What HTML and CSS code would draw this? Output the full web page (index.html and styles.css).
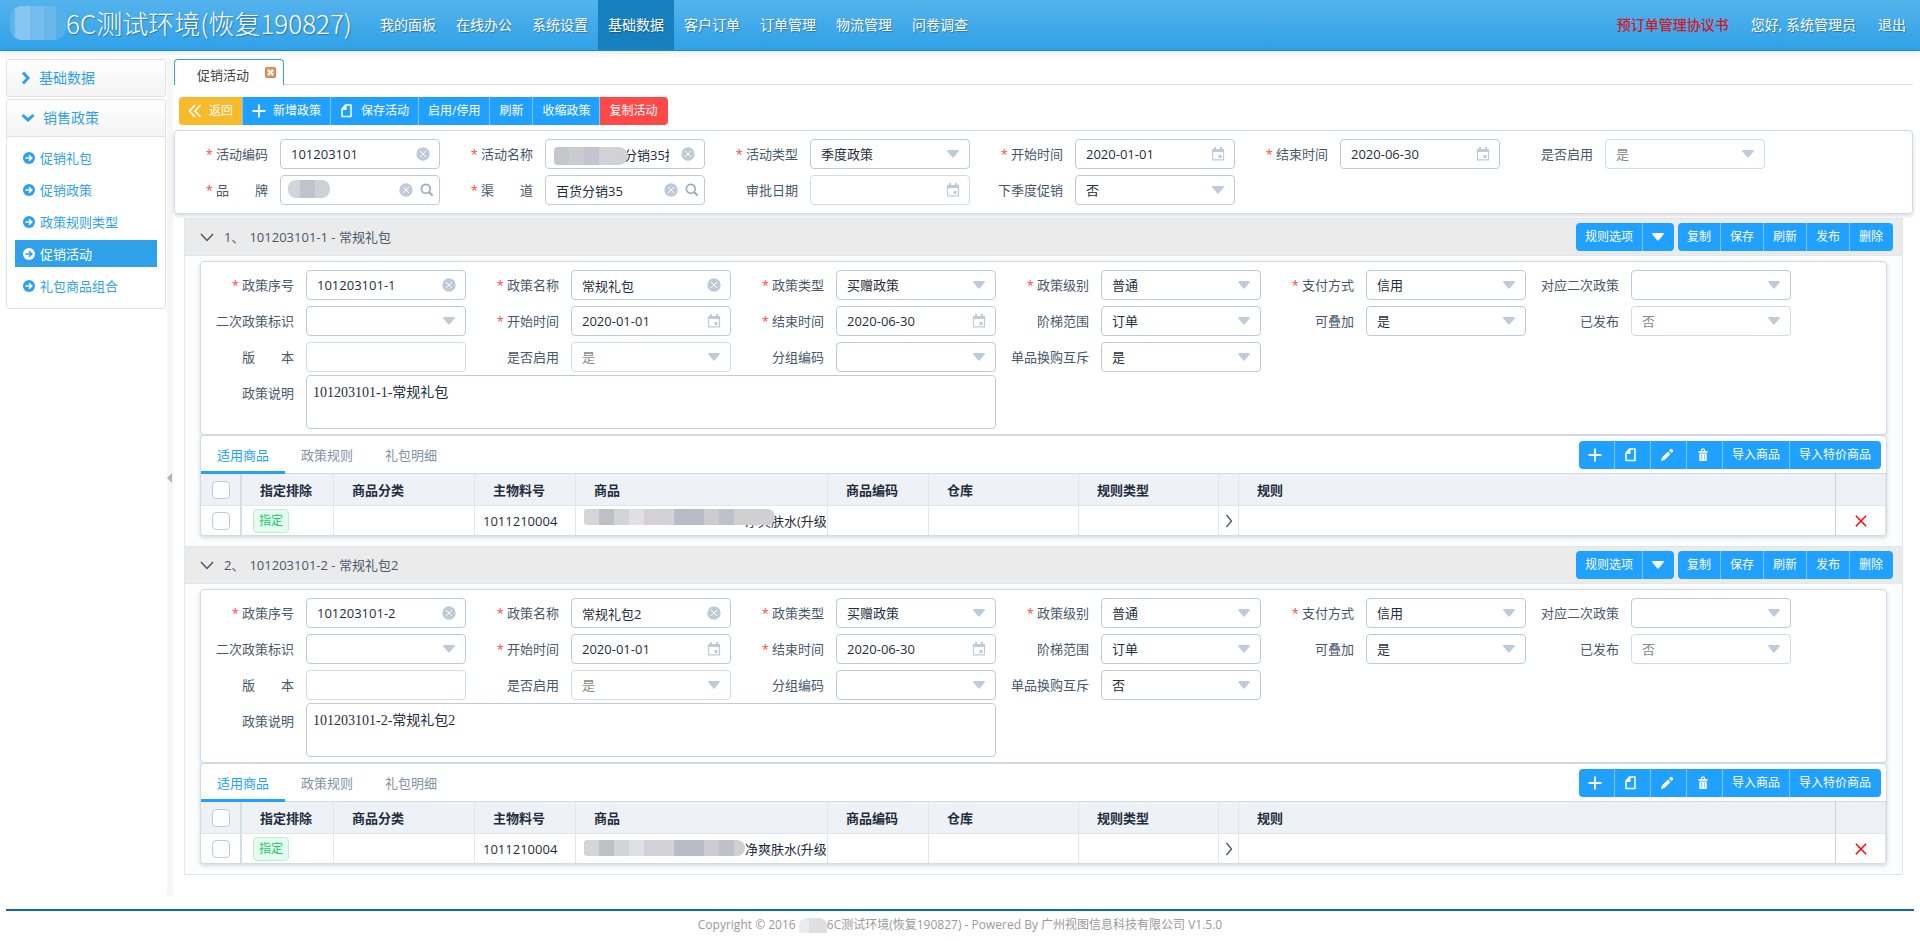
FILE: index.html
```html
<!DOCTYPE html>
<html lang="zh-CN">

<head>
    <meta charset="UTF-8">
    <meta name="viewport" content="width=device-width, initial-scale=1.0">
    <title>促销活动</title>
    <link rel="stylesheet" href="styles.css">
</head>

<body>

    <!-- icons -->
    <svg class="sprite" aria-hidden="true">
        <symbol id="i-caret" viewBox="0 0 12 8"><path d="M0 1 Q0 0 1 0 H11 Q12 0 12 1 L7 7 Q6 8 5 7 Z" fill="currentColor" /></symbol>
        <symbol id="i-clear" viewBox="0 0 14 14"><circle cx="7" cy="7" r="6.7" fill="currentColor" /><path d="M4 4 L10 10 M10 4 L4 10" stroke="#fff" stroke-width="1" /></symbol>
        <symbol id="i-date" viewBox="0 0 14 14"><path d="M1.5 2.5 H12.5 V12.8 H1.5 Z" fill="none" stroke="currentColor" stroke-width="1.2" /><path d="M1 2 H13 V5 H1 Z M3 0 H5 V3 H3 Z M9 0 H11 V3 H9 Z M7.5 8 H10.5 V11 H7.5 Z" fill="currentColor" /></symbol>
        <symbol id="i-search" viewBox="0 0 14 14"><circle cx="5.8" cy="5.8" r="4.4" fill="none" stroke="currentColor" stroke-width="1.6" /><path d="M9 9 L12.6 12.6" stroke="currentColor" stroke-width="2" /></symbol>
        <symbol id="i-plus" viewBox="0 0 14 14"><path d="M7 .5 V13.5 M.5 7 H13.5" stroke="currentColor" stroke-width="1.8" /></symbol>
        <symbol id="i-back" viewBox="0 0 14 14"><path d="M7 1 L1.5 7 L7 13 M12.5 1 L7 7 L12.5 13" fill="none" stroke="currentColor" stroke-width="1.7" /></symbol>
        <symbol id="i-doc" viewBox="0 0 14 14"><path d="M5.5 1 H11 V12.5 H2 V5 Z" fill="none" stroke="currentColor" stroke-width="1.5" stroke-linejoin="round" /><path d="M6.5 1 V6 H2 V5 L5.5 1 Z" fill="currentColor" /></symbol>
        <symbol id="i-edit" viewBox="0 0 14 14"><path d="M1 13 L2 9.5 L8 3.5 L10.5 6 L4.5 12 Z M9 2.5 L10.5 1 Q11.2 .5 12 1.2 L12.8 2 Q13.5 2.8 13 3.5 L11.5 5 Z" fill="currentColor" /></symbol>
        <symbol id="i-trash" viewBox="0 0 14 14"><path d="M2.5 3 H5 V2 Q5 .5 6.2 .5 H7.8 Q9 .5 9 2 V3 H11.5 V4.8 H2.5 Z M6 3 H8 V1.7 H6 Z" fill="currentColor" fill-rule="evenodd" /><path d="M3.3 5.5 H10.7 V13 H3.3 Z" fill="currentColor" /><path d="M5.6 6.5 V12 M8.4 6.5 V12" stroke="#20a0ff" stroke-width=".6" /></symbol>
        <symbol id="i-go" viewBox="0 0 12 12"><circle cx="6" cy="6" r="6" fill="currentColor" /><path d="M2.5 6 H8.5 M6 3.2 L8.8 6 L6 8.8" fill="none" stroke="var(--arrow, #fff)" stroke-width="1.6" /></symbol>
        <symbol id="i-down" viewBox="0 0 14 14"><path d="M1 4 L7 10.5 L13 4" fill="none" stroke="currentColor" stroke-width="1.5" /></symbol>
        <symbol id="i-right" viewBox="0 0 14 14"><path d="M4.5 1 L9.5 7 L4.5 13" fill="none" stroke="currentColor" stroke-width="1.3" /></symbol>
        <symbol id="i-cross" viewBox="0 0 14 14"><path d="M1 1 L13 13 M13 1 L1 13" stroke="currentColor" stroke-width="1.7" /></symbol>
    </svg>

    <header class="topbar">
        <h1 class="brand"><i class="mosaic mosaic-brand"></i>6C测试环境(恢复190827)</h1>
        <nav class="nav">
            <a href="#">我的面板</a>
            <a href="#">在线办公</a>
            <a href="#">系统设置</a>
            <a href="#" class="active">基础数据</a>
            <a href="#">客户订单</a>
            <a href="#">订单管理</a>
            <a href="#">物流管理</a>
            <a href="#">问卷调查</a>
        </nav>
        <div class="user">
            <a href="#" class="agreement">预订单管理协议书</a>
            <span>您好, 系统管理员</span>
            <a href="#">退出</a>
        </div>
    </header>

    <div class="layout">
        <aside class="sidebar">
            <div class="menu">
                <a href="#" class="menu-title"><svg width="12" height="14" viewBox="0 0 12 14"><path d="M3 1.5 L8 7 L3 12.5" fill="none" stroke="currentColor" stroke-width="3" /></svg>基础数据</a>
            </div>
            <div class="menu">
                <a href="#" class="menu-title"><svg width="16" height="12" viewBox="0 0 16 12"><path d="M2.5 3 L8 8 L13.5 3" fill="none" stroke="currentColor" stroke-width="3" /></svg>销售政策</a>
                <div class="menu-list">
                    <a href="#"><svg><use href="#i-go" /></svg>促销礼包</a>
                    <a href="#"><svg><use href="#i-go" /></svg>促销政策</a>
                    <a href="#"><svg><use href="#i-go" /></svg>政策规则类型</a>
                    <a href="#" class="active"><svg><use href="#i-go" /></svg>促销活动</a>
                    <a href="#"><svg><use href="#i-go" /></svg>礼包商品组合</a>
                </div>
            </div>
        </aside>

        <div class="splitter"><i></i></div>

        <main class="main">
            <div class="page-tabs">
                <div class="page-tab">促销活动
                    <button type="button" class="tab-close" aria-label="关闭"><svg viewBox="0 0 11 11"><path d="M3 3 L8 8 M8 3 L3 8" stroke="#fff" stroke-width="2" /></svg></button>
                </div>
            </div>

            <div class="btn-group toolbar">
                <button type="button" class="btn warning"><svg><use href="#i-back" /></svg>返回</button>
                <button type="button" class="btn"><svg><use href="#i-plus" /></svg>新增政策</button>
                <button type="button" class="btn"><svg><use href="#i-doc" /></svg>保存活动</button>
                <button type="button" class="btn">启用/停用</button>
                <button type="button" class="btn">刷新</button>
                <button type="button" class="btn">收缩政策</button>
                <button type="button" class="btn danger">复制活动</button>
            </div>

            <form class="panel form">
                <div class="field"><label for="code" class="required">活动编码</label><div class="control"><input id="code" type="text" value="101203101"><svg><use href="#i-clear" /></svg></div></div>
                <div class="field"><label for="name" class="required">活动名称</label><div class="control"><input id="name" class="masked" type="text" value="分销35折"><i class="mosaic mosaic-name"></i><svg><use href="#i-clear" /></svg></div></div>
                <div class="field"><label for="type" class="required">活动类型</label><div class="control"><select id="type"><option>季度政策</option></select><svg class="caret"><use href="#i-caret" /></svg></div></div>
                <div class="field"><label for="start" class="required">开始时间</label><div class="control"><input id="start" type="text" value="2020-01-01"><svg><use href="#i-date" /></svg></div></div>
                <div class="field"><label for="end" class="required">结束时间</label><div class="control"><input id="end" type="text" value="2020-06-30"><svg><use href="#i-date" /></svg></div></div>
                <div class="field"><label for="enabled">是否启用</label><div class="control"><select id="enabled" disabled><option>是</option></select><svg class="caret"><use href="#i-caret" /></svg></div></div>
                <div class="field"><label for="brand" class="required">品　　牌</label><div class="control"><input id="brand" type="text"><i class="mosaic mosaic-label"></i><svg class="second"><use href="#i-clear" /></svg><svg class="search"><use href="#i-search" /></svg></div></div>
                <div class="field"><label for="channel" class="required">渠　　道</label><div class="control"><input id="channel" type="text" value="百货分销35"><svg class="second"><use href="#i-clear" /></svg><svg class="search"><use href="#i-search" /></svg></div></div>
                <div class="field"><label for="approved">审批日期</label><div class="control"><input id="approved" type="text" disabled><svg><use href="#i-date" /></svg></div></div>
                <div class="field"><label for="next">下季度促销</label><div class="control"><select id="next"><option>否</option></select><svg class="caret"><use href="#i-caret" /></svg></div></div>
            </form>

            <div class="policies">
                <!-- policy 1 -->
                <section class="policy">
                    <div class="policy-head">
                        <svg><use href="#i-down" /></svg>
                        <h2><span>1、</span>101203101-1 - 常规礼包</h2>
                        <div class="btn-group split">
                            <button type="button" class="btn">规则选项</button>
                            <button type="button" class="btn" aria-label="更多规则"><svg class="caret-white"><use href="#i-caret" /></svg></button>
                        </div>
                        <div class="btn-group">
                            <button type="button" class="btn">复制</button>
                            <button type="button" class="btn">保存</button>
                            <button type="button" class="btn">刷新</button>
                            <button type="button" class="btn">发布</button>
                            <button type="button" class="btn">删除</button>
                        </div>
                    </div>
                    <div class="policy-body">
                        <form class="panel form">
                            <div class="field"><label for="p1-no" class="required">政策序号</label><div class="control"><input id="p1-no" type="text" value="101203101-1"><svg><use href="#i-clear" /></svg></div></div>
                            <div class="field"><label for="p1-name" class="required">政策名称</label><div class="control"><input id="p1-name" type="text" value="常规礼包"><svg><use href="#i-clear" /></svg></div></div>
                            <div class="field"><label for="p1-type" class="required">政策类型</label><div class="control"><select id="p1-type"><option>买赠政策</option></select><svg class="caret"><use href="#i-caret" /></svg></div></div>
                            <div class="field"><label for="p1-level" class="required">政策级别</label><div class="control"><select id="p1-level"><option>普通</option></select><svg class="caret"><use href="#i-caret" /></svg></div></div>
                            <div class="field"><label for="p1-pay" class="required">支付方式</label><div class="control"><select id="p1-pay"><option>信用</option></select><svg class="caret"><use href="#i-caret" /></svg></div></div>
                            <div class="field"><label for="p1-second">对应二次政策</label><div class="control"><select id="p1-second"><option></option></select><svg class="caret"><use href="#i-caret" /></svg></div></div>
                            <div class="field"><label for="p1-flag">二次政策标识</label><div class="control"><select id="p1-flag"><option></option></select><svg class="caret"><use href="#i-caret" /></svg></div></div>
                            <div class="field"><label for="p1-start" class="required">开始时间</label><div class="control"><input id="p1-start" type="text" value="2020-01-01"><svg><use href="#i-date" /></svg></div></div>
                            <div class="field"><label for="p1-end" class="required">结束时间</label><div class="control"><input id="p1-end" type="text" value="2020-06-30"><svg><use href="#i-date" /></svg></div></div>
                            <div class="field"><label for="p1-range">阶梯范围</label><div class="control"><select id="p1-range"><option>订单</option></select><svg class="caret"><use href="#i-caret" /></svg></div></div>
                            <div class="field"><label for="p1-stack">可叠加</label><div class="control"><select id="p1-stack"><option>是</option></select><svg class="caret"><use href="#i-caret" /></svg></div></div>
                            <div class="field"><label for="p1-published">已发布</label><div class="control"><select id="p1-published" disabled><option>否</option></select><svg class="caret"><use href="#i-caret" /></svg></div></div>
                            <div class="field"><label for="p1-version">版　　本</label><div class="control"><input id="p1-version" type="text" disabled></div></div>
                            <div class="field"><label for="p1-enabled">是否启用</label><div class="control"><select id="p1-enabled" disabled><option>是</option></select><svg class="caret"><use href="#i-caret" /></svg></div></div>
                            <div class="field"><label for="p1-group">分组编码</label><div class="control"><select id="p1-group"><option></option></select><svg class="caret"><use href="#i-caret" /></svg></div></div>
                            <div class="field"><label for="p1-mutex">单品换购互斥</label><div class="control"><select id="p1-mutex"><option>是</option></select><svg class="caret"><use href="#i-caret" /></svg></div></div>
                            <div class="field note"><label for="p1-note">政策说明</label><textarea id="p1-note">101203101-1-常规礼包</textarea></div>
                        </form>

                        <div class="panel goods">
                            <div class="goods-bar">
                                <div class="tabs" role="tablist">
                                    <button type="button" role="tab" class="tab active">适用商品</button>
                                    <button type="button" role="tab" class="tab">政策规则</button>
                                    <button type="button" role="tab" class="tab">礼包明细</button>
                                </div>
                                <div class="btn-group">
                                    <button type="button" class="btn icon" aria-label="新增"><svg><use href="#i-plus" /></svg></button>
                                    <button type="button" class="btn icon" aria-label="保存"><svg><use href="#i-doc" /></svg></button>
                                    <button type="button" class="btn icon" aria-label="编辑"><svg><use href="#i-edit" /></svg></button>
                                    <button type="button" class="btn icon" aria-label="删除"><svg><use href="#i-trash" /></svg></button>
                                    <button type="button" class="btn">导入商品</button>
                                    <button type="button" class="btn">导入特价商品</button>
                                </div>
                            </div>
                            <table class="table">
                                <colgroup><col class="c-check"><col class="c-flag"><col class="c-cat"><col class="c-no"><col class="c-goods"><col class="c-no"><col class="c-store"><col class="c-type"><col class="c-open"><col><col class="c-del"></colgroup>
                                <thead>
                                    <tr>
                                        <th class="check"><input type="checkbox" aria-label="全选"></th>
                                        <th>指定排除</th>
                                        <th>商品分类</th>
                                        <th>主物料号</th>
                                        <th>商品</th>
                                        <th>商品编码</th>
                                        <th>仓库</th>
                                        <th>规则类型</th>
                                        <th></th>
                                        <th class="rule">规则</th>
                                        <th class="del"></th>
                                    </tr>
                                </thead>
                                <tbody>
                                    <tr>
                                        <td class="check"><input type="checkbox" aria-label="选择"></td>
                                        <td><span class="tag">指定</span></td>
                                        <td></td>
                                        <td>1011210004</td>
                                        <td class="goods-name">净爽肤水(升级<i class="mosaic mosaic-goods long"></i></td>
                                        <td></td>
                                        <td></td>
                                        <td></td>
                                        <td class="open"><svg><use href="#i-right" /></svg></td>
                                        <td class="rule"></td>
                                        <td class="del"><button type="button" aria-label="移除"><svg><use href="#i-cross" /></svg></button></td>
                                    </tr>
                                </tbody>
                            </table>
                        </div>
                    </div>
                </section>

                <!-- policy 2 -->
                <section class="policy">
                    <div class="policy-head">
                        <svg><use href="#i-down" /></svg>
                        <h2><span>2、</span>101203101-2 - 常规礼包2</h2>
                        <div class="btn-group split">
                            <button type="button" class="btn">规则选项</button>
                            <button type="button" class="btn" aria-label="更多规则"><svg class="caret-white"><use href="#i-caret" /></svg></button>
                        </div>
                        <div class="btn-group">
                            <button type="button" class="btn">复制</button>
                            <button type="button" class="btn">保存</button>
                            <button type="button" class="btn">刷新</button>
                            <button type="button" class="btn">发布</button>
                            <button type="button" class="btn">删除</button>
                        </div>
                    </div>
                    <div class="policy-body">
                        <form class="panel form">
                            <div class="field"><label for="p2-no" class="required">政策序号</label><div class="control"><input id="p2-no" type="text" value="101203101-2"><svg><use href="#i-clear" /></svg></div></div>
                            <div class="field"><label for="p2-name" class="required">政策名称</label><div class="control"><input id="p2-name" type="text" value="常规礼包2"><svg><use href="#i-clear" /></svg></div></div>
                            <div class="field"><label for="p2-type" class="required">政策类型</label><div class="control"><select id="p2-type"><option>买赠政策</option></select><svg class="caret"><use href="#i-caret" /></svg></div></div>
                            <div class="field"><label for="p2-level" class="required">政策级别</label><div class="control"><select id="p2-level"><option>普通</option></select><svg class="caret"><use href="#i-caret" /></svg></div></div>
                            <div class="field"><label for="p2-pay" class="required">支付方式</label><div class="control"><select id="p2-pay"><option>信用</option></select><svg class="caret"><use href="#i-caret" /></svg></div></div>
                            <div class="field"><label for="p2-second">对应二次政策</label><div class="control"><select id="p2-second"><option></option></select><svg class="caret"><use href="#i-caret" /></svg></div></div>
                            <div class="field"><label for="p2-flag">二次政策标识</label><div class="control"><select id="p2-flag"><option></option></select><svg class="caret"><use href="#i-caret" /></svg></div></div>
                            <div class="field"><label for="p2-start" class="required">开始时间</label><div class="control"><input id="p2-start" type="text" value="2020-01-01"><svg><use href="#i-date" /></svg></div></div>
                            <div class="field"><label for="p2-end" class="required">结束时间</label><div class="control"><input id="p2-end" type="text" value="2020-06-30"><svg><use href="#i-date" /></svg></div></div>
                            <div class="field"><label for="p2-range">阶梯范围</label><div class="control"><select id="p2-range"><option>订单</option></select><svg class="caret"><use href="#i-caret" /></svg></div></div>
                            <div class="field"><label for="p2-stack">可叠加</label><div class="control"><select id="p2-stack"><option>是</option></select><svg class="caret"><use href="#i-caret" /></svg></div></div>
                            <div class="field"><label for="p2-published">已发布</label><div class="control"><select id="p2-published" disabled><option>否</option></select><svg class="caret"><use href="#i-caret" /></svg></div></div>
                            <div class="field"><label for="p2-version">版　　本</label><div class="control"><input id="p2-version" type="text" disabled></div></div>
                            <div class="field"><label for="p2-enabled">是否启用</label><div class="control"><select id="p2-enabled" disabled><option>是</option></select><svg class="caret"><use href="#i-caret" /></svg></div></div>
                            <div class="field"><label for="p2-group">分组编码</label><div class="control"><select id="p2-group"><option></option></select><svg class="caret"><use href="#i-caret" /></svg></div></div>
                            <div class="field"><label for="p2-mutex">单品换购互斥</label><div class="control"><select id="p2-mutex"><option>否</option></select><svg class="caret"><use href="#i-caret" /></svg></div></div>
                            <div class="field note"><label for="p2-note">政策说明</label><textarea id="p2-note">101203101-2-常规礼包2</textarea></div>
                        </form>

                        <div class="panel goods">
                            <div class="goods-bar">
                                <div class="tabs" role="tablist">
                                    <button type="button" role="tab" class="tab active">适用商品</button>
                                    <button type="button" role="tab" class="tab">政策规则</button>
                                    <button type="button" role="tab" class="tab">礼包明细</button>
                                </div>
                                <div class="btn-group">
                                    <button type="button" class="btn icon" aria-label="新增"><svg><use href="#i-plus" /></svg></button>
                                    <button type="button" class="btn icon" aria-label="保存"><svg><use href="#i-doc" /></svg></button>
                                    <button type="button" class="btn icon" aria-label="编辑"><svg><use href="#i-edit" /></svg></button>
                                    <button type="button" class="btn icon" aria-label="删除"><svg><use href="#i-trash" /></svg></button>
                                    <button type="button" class="btn">导入商品</button>
                                    <button type="button" class="btn">导入特价商品</button>
                                </div>
                            </div>
                            <table class="table">
                                <colgroup><col class="c-check"><col class="c-flag"><col class="c-cat"><col class="c-no"><col class="c-goods"><col class="c-no"><col class="c-store"><col class="c-type"><col class="c-open"><col><col class="c-del"></colgroup>
                                <thead>
                                    <tr>
                                        <th class="check"><input type="checkbox" aria-label="全选"></th>
                                        <th>指定排除</th>
                                        <th>商品分类</th>
                                        <th>主物料号</th>
                                        <th>商品</th>
                                        <th>商品编码</th>
                                        <th>仓库</th>
                                        <th>规则类型</th>
                                        <th></th>
                                        <th class="rule">规则</th>
                                        <th class="del"></th>
                                    </tr>
                                </thead>
                                <tbody>
                                    <tr>
                                        <td class="check"><input type="checkbox" aria-label="选择"></td>
                                        <td><span class="tag">指定</span></td>
                                        <td></td>
                                        <td>1011210004</td>
                                        <td class="goods-name">净爽肤水(升级<i class="mosaic mosaic-goods"></i></td>
                                        <td></td>
                                        <td></td>
                                        <td></td>
                                        <td class="open"><svg><use href="#i-right" /></svg></td>
                                        <td class="rule"></td>
                                        <td class="del"><button type="button" aria-label="移除"><svg><use href="#i-cross" /></svg></button></td>
                                    </tr>
                                </tbody>
                            </table>
                        </div>
                    </div>
                </section>
            </div>
        </main>
    </div>

    <footer class="footer">Copyright © 2016 <i class="mosaic mosaic-footer"></i>6C测试环境(恢复190827) - Powered By 广州视图信息科技有限公司 V1.5.0</footer>

</body>

</html>
```

FILE: styles.css
```css
* {
    box-sizing: border-box;
    margin: 0;
    padding: 0;
}

body {
    font-family: "Open Sans", "Noto Sans CJK SC", sans-serif;
    font-size: 13px;
    line-height: 20px;
    color: #1f2d3d;
    background: #fff;
}

a {
    color: inherit;
    text-decoration: none;
}

button,
input,
select {
    font: inherit;
    color: inherit;
}

button {
    border: 0;
    background: none;
    cursor: pointer;
}

svg {
    flex: none;
    width: 14px;
    height: 14px;
}

.sprite {
    position: absolute;
    width: 0;
    height: 0;
}

/* top bar */
.topbar {
    display: flex;
    height: 51px;
    color: #fff;
    background: linear-gradient(#55b3ec, #2fa1e8);
    border-bottom: 1px solid #1b8bd2;
    box-shadow: 0 1px 8px rgba(0, 0, 0, .12);
    text-shadow: 1px 1px 1px rgba(0, 0, 0, .3);
}

.brand {
    display: flex;
    align-items: center;
    width: 370px;
    padding: 0 0 4px 10px;
    font-size: 26px;
    font-weight: 300;
    font-family: "Noto Sans CJK SC", sans-serif;
    white-space: nowrap;
}

.nav {
    display: flex;
    flex: 1;
    font-size: 14px;
}

.nav a {
    padding: 0 10px;
    line-height: 50px;
    white-space: nowrap;
}

.nav .active {
    background: #1780bf;
}

.user {
    display: flex;
    gap: 22px;
    padding-right: 14px;
    font-size: 14px;
    line-height: 50px;
    white-space: nowrap;
}

.agreement {
    color: #d9161c;
    font-weight: 500;
    text-shadow: none;
}

/* page frame */
.layout {
    display: flex;
    padding: 8px 7px 0 6px;
}

.sidebar {
    display: flex;
    flex-direction: column;
    gap: 2px;
    width: 160px;
    color: #2fa1e8;
}

.menu {
    border: 1px solid #e2e2e2;
    border-radius: 3px;
}

.menu-title {
    display: flex;
    align-items: center;
    gap: 7px;
    height: 36px;
    padding-left: 13px;
    font-size: 14px;
    background: linear-gradient(#fff, #f4f4f4);
    border-radius: 3px;
}

.menu-title svg {
    width: auto;
    height: auto;
}

.menu-list {
    display: flex;
    flex-direction: column;
    gap: 5px;
    padding: 7px 8px 9px;
    border-top: 1px solid #e2e2e2;
}

.menu-list a {
    display: flex;
    align-items: center;
    gap: 5px;
    height: 27px;
    padding-left: 8px;
}

.menu-list svg {
    width: 12px;
    height: 12px;
}

.menu-list .active {
    color: #fff;
    background: #2fa1e8;
    --arrow: #2fa1e8;
}

.splitter {
    display: flex;
    align-items: center;
    width: 6px;
    margin-left: 1px;
    background: #f6f6f6;
}

.splitter i {
    border: 5px solid transparent;
    border-right-color: #b5b5b5;
    border-left: 0;
}

.main {
    flex: 1;
    min-width: 0;
    padding: 0 0 21px 1px;
}

.page-tabs {
    display: flex;
    height: 26px;
    border-bottom: 1px solid #ddd;
}

.page-tab {
    display: flex;
    align-items: center;
    gap: 16px;
    height: 26px;
    padding: 4px 7px 0 22px;
    color: #444;
    background: #fff;
    border: 1px solid #2fa1e8;
    border-bottom: 0;
    border-radius: 4px 4px 0 0;
}

.tab-close {
    width: 11px;
    height: 11px;
    margin-bottom: 5px;
    background: #e79a63;
    border-radius: 2px;
    outline: 1px solid #c98452;
    outline-offset: -1px;
}

.tab-close svg {
    display: block;
    width: 11px;
    height: 11px;
}

/* buttons */
.btn-group {
    display: flex;
    flex: none;
}

.btn {
    display: flex;
    align-items: center;
    gap: 7px;
    height: 28px;
    padding: 0 9px;
    font-size: 12px;
    color: #fff;
    background: #20a0ff;
    border-right: 1px solid #79c6ff;
    white-space: nowrap;
}

.btn:first-child {
    border-radius: 4px 0 0 4px;
}

.btn:last-child {
    border-right-color: transparent;
    border-radius: 0 4px 4px 0;
}

.btn.warning {
    background: #f7ba2a;
}

.btn.danger {
    background: #ff4949;
}

.btn.icon {
    width: 36px;
}

.caret-white {
    width: 12px;
    height: 8px;
}

.toolbar {
    margin: 12px 0 5px 5px;
}

/* forms */
.panel {
    background: #fff;
    border: 1px solid #d1dbe5;
    border-radius: 4px;
    box-shadow: 0 2px 4px rgba(0, 0, 0, .15);
}

.form {
    display: flex;
    flex-wrap: wrap;
    padding: 5px 0;
}

.field {
    display: flex;
    align-items: center;
    width: 265px;
    height: 36px;
}

.field label {
    width: 93px;
    margin-right: 12px;
    text-align: right;
    color: #48576a;
    white-space: nowrap;
}

.required::before {
    content: "*";
    margin-right: 3px;
    color: #ff4949;
}

.control {
    position: relative;
    width: 160px;
}

.control input,
.control select {
    display: block;
    width: 160px;
    height: 30px;
    padding: 0 35px 0 10px;
    appearance: none;
    color: #1f2d3d;
    background: #fff;
    border: 1px solid #bfcbd9;
    border-radius: 4px;
    opacity: 1;
}

.control input:disabled,
.control select:disabled {
    color: #888;
    border-color: #d1dbe5;
}

.control input.masked {
    padding-left: 78px;
}

.control svg {
    position: absolute;
    top: 8px;
    right: 10px;
    color: #bfcbd9;
    pointer-events: none;
}

.control .caret {
    top: 11px;
    right: 11px;
    width: 12px;
    height: 8px;
}

.control .second {
    right: 27px;
}

.control .search {
    right: 6px;
    color: #97a8be;
}

.note {
    width: 795px;
    height: 54px;
    align-items: flex-start;
}

.note label {
    line-height: 36px;
}

.note textarea {
    display: block;
    width: 690px;
    height: 54px;
    padding: 6px;
    font: 14px/22px "Liberation Serif", "Noto Sans CJK SC", serif;
    color: #1f2d3d;
    border: 1px solid #bfcbd9;
    border-radius: 4px;
    resize: none;
}

/* policies */
.policies {
    margin: 4px 10px 0;
    border: 1px solid #dfe6ec;
    border-top: 0;
}

.policy-head {
    display: flex;
    align-items: center;
    gap: 4px;
    height: 38px;
    padding: 0 9px 0 15px;
    color: #48576a;
    background: #ebebeb;
    border-top: 1px solid #dfe6ec;
    border-bottom: 1px solid #dfe6ec;
}

.policy-head h2 {
    flex: 1;
    padding-left: 6px;
    font-size: 13px;
    font-weight: 400;
}

.policy-head h2 span {
    padding-right: 5px;
}

.policy-body {
    padding: 5px 15px 10px;
    background: #fbfdff;
}

.goods-bar {
    display: flex;
    justify-content: space-between;
    align-items: center;
    height: 38px;
    padding-right: 5px;
    border-bottom: 1px solid #d1dbe5;
}

.tabs {
    display: flex;
}

.tab {
    height: 38px;
    padding: 0 16px;
    color: #8391a5;
}

.tab.active {
    color: #20a0ff;
    box-shadow: inset 0 -3px #20a0ff;
}

.table {
    width: 100%;
    table-layout: fixed;
    border-collapse: separate;
    border-spacing: 0;
}

.c-check { width: 41px; }
.c-flag { width: 92px; }
.c-cat { width: 141px; }
.c-no { width: 101px; }
.c-goods { width: 252px; }
.c-store { width: 150px; }
.c-type { width: 140px; }
.c-open { width: 20px; }
.c-del { width: 50px; }

.table th {
    height: 32px;
    padding-left: 18px;
    text-align: left;
    font-weight: 600;
    background: #eef1f6;
    border-right: 1px solid #dfe6ec;
    border-bottom: 1px solid #dfe6ec;
}

.table td {
    height: 29px;
    padding-left: 8px;
    border-right: 1px solid #dfe6ec;
    white-space: nowrap;
}

.table .check,
.table .open,
.table .del {
    padding: 0;
    text-align: center;
}

.table .check {
    border-right: 2px solid #d5dde5;
}

.table .rule {
    border-right: 1px solid #ccd2d9;
}

.table .del {
    border-right: 1px solid #dfe6ec;
}

.table svg {
    display: block;
    margin: 0 auto;
}

.open {
    color: #475669;
}

.del button {
    display: block;
    margin: 0 auto;
    color: #f00;
}

.del button svg {
    width: 12px;
    height: 12px;
}

.check input {
    display: block;
    width: 18px;
    height: 18px;
    margin: 0 auto;
    appearance: none;
    background: #fff;
    border: 1px solid #bfcbd9;
    border-radius: 4px;
}

.tag {
    display: block;
    width: 36px;
    margin-left: 3px;
    font-size: 12px;
    line-height: 22px;
    text-align: center;
    color: #13ce66;
    background: #e7faf0;
    border: 1px solid #b8f0d1;
    border-radius: 4px;
}

.table .goods-name {
    position: relative;
    padding-left: 169px;
    overflow: hidden;
}

/* masked text */
.mosaic {
    display: block;
    flex: none;
}

.mosaic-brand {
    width: 56px;
    height: 34px;
    border-radius: 12px;
    background: linear-gradient(90deg, #5fb5eb 0 5px, #86c6f0 5px 20px, #74bdee 20px 34px, #68b8ec 34px 46px, #55b0ea 46px);
}

.mosaic-name {
    position: absolute;
    top: 8px;
    left: 9px;
    width: 74px;
    height: 18px;
    border-radius: 4px 9px 9px 4px;
    background: linear-gradient(90deg, #c5c6c9 0 15px, #cbcbce 15px 30px, #c2c5d0 30px 45px, #d3d0d6 45px 60px, #d0d1d4 60px);
}

.mosaic-label {
    position: absolute;
    top: 5px;
    left: 8px;
    width: 42px;
    height: 18px;
    border-radius: 8px;
    background: linear-gradient(90deg, #d3d4d7 0 12px, #bfc3ce 12px 27px, #cfd1d7 27px);
}

.mosaic-goods {
    position: absolute;
    top: 6px;
    left: 8px;
    width: 161px;
    height: 16px;
    border-radius: 3px 8px 8px 3px;
    background: linear-gradient(90deg, #d5d5d7 0 15px, #bdc0c5 15px 30px, #d3d4d6 30px 45px, #e0e0e2 45px 60px, #d4d0d8 60px 75px, #d3d3d6 75px 90px, #b9bcc7 90px 120px, #cbcbd0 120px 135px, #bec0ca 135px 150px, #d0cfd2 150px);
}

.mosaic-goods.long {
    top: 3px;
    width: 191px;
}

.mosaic-footer {
    display: inline-block;
    width: 28px;
    height: 15px;
    vertical-align: middle;
    border-radius: 8px 8px 0 0;
    background: linear-gradient(90deg, #ececee 0 10px, #dedfe1 10px);
}

.footer {
    margin: 13px 6px 0;
    padding-top: 4px;
    border-top: 2px solid #0b6aab;
    font-size: 12px;
    text-align: center;
    color: #999;
}
```
